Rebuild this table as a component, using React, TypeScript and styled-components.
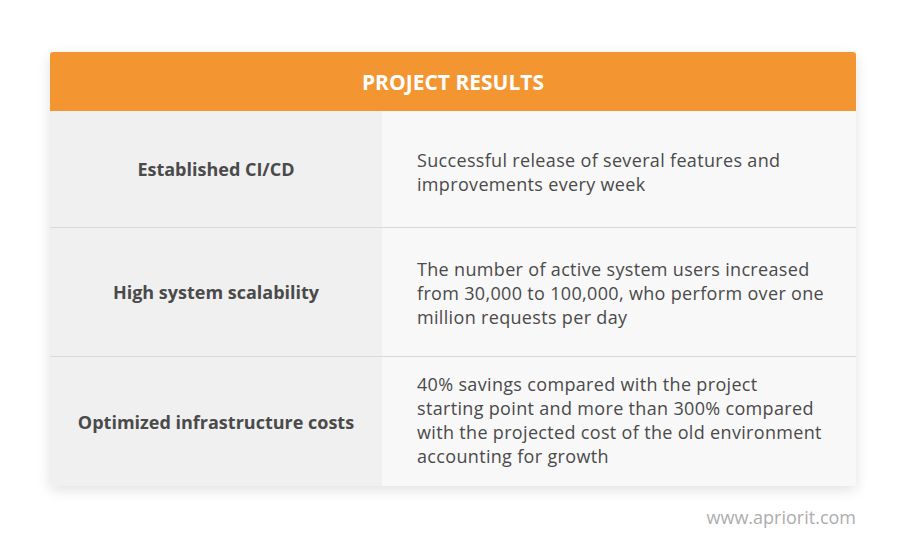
import React from "react";
import styled, { createGlobalStyle } from "styled-components";

const Global = createGlobalStyle`
  html, body { margin: 0; padding: 0; background: #ffffff; }
  body { font-family: "Open Sans", "Lato", sans-serif; }
`;

const Page = styled.div`
  width: 906px;
  height: 559px;
  box-sizing: border-box;
  padding: 52px 50px 0 50px;
  display: flex;
  flex-direction: column;
`;

const Card = styled.div`
  border-radius: 3px;
  overflow: hidden;
  box-shadow: 0 4px 14px rgba(0, 0, 0, 0.12);
  display: flex;
  flex-direction: column;
`;

const Header = styled.div`
  height: 59px;
  background: #f39632;
  color: #ffffff;
  font-weight: 700;
  font-size: 21px;
  display: flex;
  align-items: center;
  justify-content: center;
`;

const Row = styled.div<{ $h: number; $last?: boolean }>`
  height: ${(p) => p.$h}px;
  display: grid;
  grid-template-columns: 332px 1fr;
  border-bottom: ${(p) => (p.$last ? "none" : "1px solid #d9d9d9")};
`;

const Label = styled.div`
  background: #f0f0f0;
  color: #4a4a4a;
  font-weight: 700;
  font-size: 18px;
  display: flex;
  align-items: center;
  justify-content: center;
  text-align: center;
`;

const Value = styled.div<{ $shift: number }>`
  background: #f8f8f8;
  color: #4a4a4a;
  font-size: 18px;
  line-height: 24px;
  letter-spacing: 0.33px;
  padding: ${(p) => (p.$shift > 0 ? `${p.$shift * 2}px 20px 0 35px` : `0 20px ${-p.$shift * 2}px 35px`)};
  display: flex;
  flex-direction: column;
  justify-content: center;
  white-space: nowrap;
`;

const Line = styled.span`
  display: block;
`;

const Footer = styled.div`
  margin-top: 19px;
  text-align: right;
  color: #adadad;
  font-size: 18px;
`;

const rows = [
  {
    label: "Established CI/CD",
    lines: ["Successful release of several features and", "improvements every week"],
    h: 116,
    shift: 3,
  },
  {
    label: "High system scalability",
    lines: [
      "The number of active system users increased",
      "from 30,000 to 100,000, who perform over one",
      "million requests per day",
    ],
    h: 128,
    shift: 1,
  },
  {
    label: "Optimized infrastructure costs",
    lines: [
      "40% savings compared with the project",
      "starting point and more than 300% compared",
      "with the projected cost of the old environment",
      "accounting for growth",
    ],
    h: 129,
    shift: -2,
  },
];

export default function App() {
  return (
    <>
      <Global />
      <Page>
        <Card>
          <Header>PROJECT RESULTS</Header>
          {rows.map((r, i) => (
            <Row key={r.label} $h={r.h} $last={i === rows.length - 1}>
              <Label>{r.label}</Label>
              <Value $shift={r.shift}>
                {r.lines.map((l) => (
                  <Line key={l}>{l}</Line>
                ))}
              </Value>
            </Row>
          ))}
        </Card>
        <Footer>www.apriorit.com</Footer>
      </Page>
    </>
  );
}
